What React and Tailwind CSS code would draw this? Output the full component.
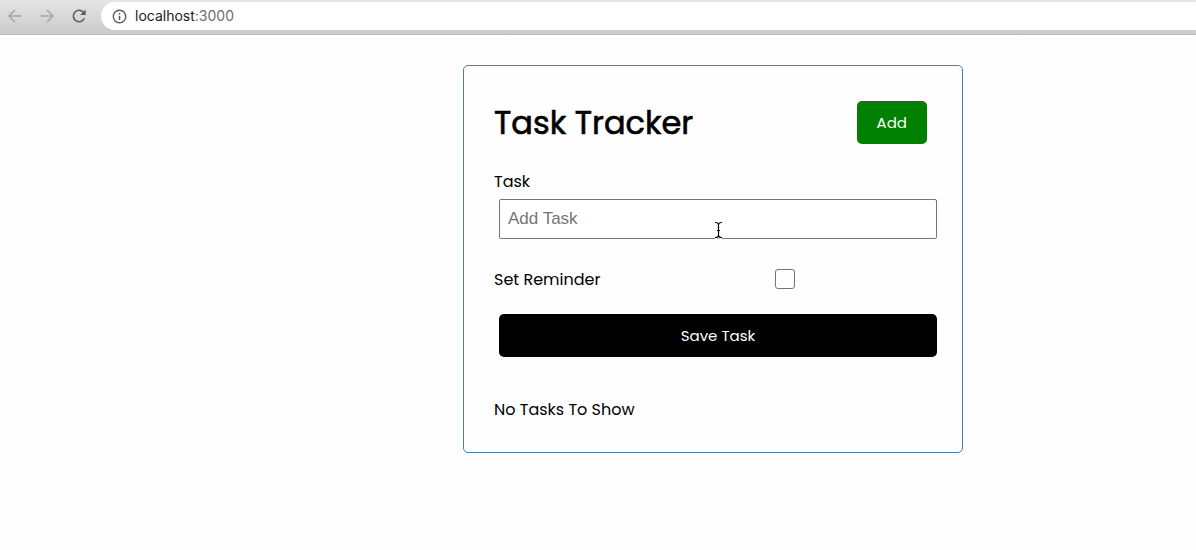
import { useState } from "react";

function BrowserBar() {
  return (
    <header className="flex h-[35px] items-start border-b border-[#bdbdbd] bg-linear-to-b from-[#e4e4e4] to-[#cbcbcb] pt-[2px] font-[Inter,sans-serif]">
      <nav className="flex h-7 w-[101px] shrink-0 items-center gap-4 pl-[7px]" aria-label="Browser">
        <button type="button" aria-label="Back" className="text-[#a6a6a6]">
          <svg width="16" height="16" viewBox="0 0 16 16" fill="none" stroke="currentColor" strokeWidth="1.5">
            <path d="M14.5 8H2M8 2L2 8l6 6" />
          </svg>
        </button>
        <button type="button" aria-label="Forward" className="text-[#a6a6a6]">
          <svg width="16" height="16" viewBox="0 0 16 16" fill="none" stroke="currentColor" strokeWidth="1.5">
            <path d="M1.5 8H14M8 2l6 6-6 6" />
          </svg>
        </button>
        <button type="button" aria-label="Reload" className="text-[#5b5d60]">
          <svg width="16" height="16" viewBox="0 0 16 16" fill="none">
            <path d="M13.3 10.2A5.7 5.7 0 1 1 12.2 4.1L13.5 5.5" stroke="currentColor" strokeWidth="1.6" />
            <path d="M14.7 1.5v5.6H9.1z" fill="currentColor" />
          </svg>
        </button>
      </nav>
      <div className="flex h-7 flex-1 items-center gap-2 rounded-l-full bg-white pl-[11px]">
        <svg width="15" height="15" viewBox="0 0 15 15" fill="none" className="text-[#5b5d60]" aria-hidden="true">
          <circle cx="7.5" cy="7.5" r="6.2" stroke="currentColor" strokeWidth="1.4" />
          <path d="M7.5 6.7v4.2M7.5 4v1.5" stroke="currentColor" strokeWidth="1.5" />
        </svg>
        <span className="text-sm text-[#202124]">
          localhost<span className="text-[#6b6e72]">:3000</span>
        </span>
      </div>
    </header>
  );
}

export default function App() {
  const [task, setTask] = useState("");
  const [reminder, setReminder] = useState(false);

  return (
    <div className="min-h-screen bg-[#fefefe] font-[Poppins,Inter,sans-serif] text-base text-black">
      <BrowserBar />
      <main className="pt-[30px] pl-[230px]">
        <section className="relative mx-auto max-w-[500px] rounded-[5px] border border-[#4682b4] p-[30px]">
          <div className="flex items-center justify-between py-[5px] pr-[5px]">
            <h1 className="text-[32px] leading-10 font-normal [-webkit-text-stroke:0.02em_currentColor]">Task Tracker</h1>
            <button type="button" className="h-[43px] rounded-[5px] bg-[#008000] px-5 pt-[2px] text-[15px] text-white">
              Add
            </button>
          </div>
          <form className="mt-5" onSubmit={(e) => e.preventDefault()}>
            <label htmlFor="task" className="block leading-[26px]">
              Task
            </label>
            <div className="-mr-[5px] ml-[5px] pt-1">
              <input
                id="task"
                type="text"
                placeholder="Add Task"
                value={task}
                onChange={(e) => setTask(e.target.value)}
                className="block h-10 w-full rounded-[2px] border border-[#767676] bg-white px-2 font-['Liberation_Sans',sans-serif] text-[17px] placeholder:text-[#757575]"
              />
            </div>
            <div className="mt-7 flex h-6 items-center">
              <label htmlFor="reminder" className="flex-1 pt-[2px] whitespace-nowrap">
                Set Reminder
              </label>
              <div className="flex flex-2 justify-center pr-[2px]">
                <input
                  id="reminder"
                  type="checkbox"
                  checked={reminder}
                  onChange={(e) => setReminder(e.target.checked)}
                  className="size-5 appearance-none rounded-[3px] border border-[#767676] bg-white checked:bg-[#0075ff]"
                />
              </div>
            </div>
            <div className="-mr-[5px] ml-[5px] pt-[23px]">
              <button type="submit" className="block h-[43px] w-full rounded-[5px] bg-black pt-[2px] text-[15px] text-white">
                Save Task
              </button>
            </div>
          </form>
          <p className="mt-[41px] leading-6">No Tasks To Show</p>
          <svg
            className="pointer-events-none absolute top-[155px] left-[250px]"
            width="9"
            height="18"
            viewBox="0 0 9 18"
            fill="none"
            aria-hidden="true"
          >
            <path d="M1 1.5c2 0 3.5.5 3.5 2v11c0 1.5-1.5 2-3.5 2M8 1.5c-2 0-3.5.5-3.5 2v11c0 1.5 1.5 2 3.5 2M3 9.5h3" stroke="#fff" strokeWidth="3" />
            <path d="M1 1.5c2 0 3.5.5 3.5 2v11c0 1.5-1.5 2-3.5 2M8 1.5c-2 0-3.5.5-3.5 2v11c0 1.5 1.5 2 3.5 2M3 9.5h3" stroke="#000" strokeWidth="1.2" />
          </svg>
        </section>
      </main>
    </div>
  );
}
